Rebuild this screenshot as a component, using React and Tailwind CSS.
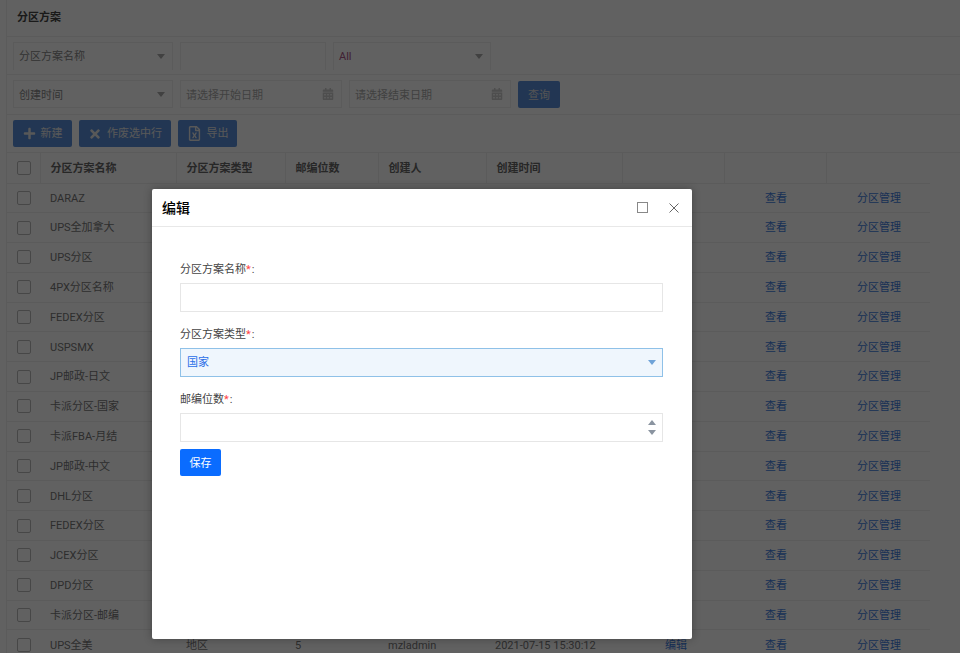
import React from "react";
import { FaPlus, FaTimes, FaRegFileExcel, FaCalendarAlt } from "react-icons/fa";

const rows = ["DARAZ","UPS全加拿大","UPS分区","4PX分区名称","FEDEX分区","USPSMX","JP邮政-日文","卡派分区-国家","卡派FBA-月结","JP邮政-中文","DHL分区","FEDEX分区","JCEX分区","DPD分区","卡派分区-邮编","UPS全美"];

function Caret({ className = "" }) {
  return <span className={`w-0 h-0 border-l-[4.5px] border-r-[4.5px] border-t-[5px] border-l-transparent border-r-transparent ${className}`} />;
}

function Box({ width, children, noBottom }) {
  return (
    <div className={`${width} h-[28px] flex items-center justify-between pl-[5px] pr-[7px] border border-[#eee] bg-white text-[11px] text-[#888] ${noBottom ? "border-b-0" : ""}`}>
      {children}
    </div>
  );
}

function Check() {
  return <span className="block w-[14px] h-[14px] border border-[#bbb] rounded-[2px] bg-white" />;
}

function Tool({ icon, label, width }) {
  return (
    <button className={`${width} h-[27px] flex items-center justify-center gap-[5px] rounded-[2px] bg-[#5b8fd9] text-[#e8e8e8] text-[11px]`}>
      {icon}
      <span className="pt-[2px]">{label}</span>
    </button>
  );
}

function Th({ children, w, last }) {
  return <th className={`${w} h-[30px] pl-[10px] pt-[3px] text-left font-bold text-[#666] text-[11px] ${last ? "" : "border-r border-[#f0f0f0]"}`}>{children}</th>;
}

function Field({ label, children }) {
  return (
    <div>
      <div className="h-[18px] pt-[4px] flex items-center text-[11px] text-[#444]">
        {label}<span className="text-[#f44]">*</span><span className="ml-[1px]">:</span>
      </div>
      {children}
    </div>
  );
}

export default function App() {
  return (
    <div className="relative h-[653px] w-[960px] overflow-hidden bg-white font-['Roboto','Noto_Sans_CJK_SC',sans-serif]">
      <div className="ml-[6px] border-l border-[#eee] h-full">
        <div className="h-[37px] flex items-center pl-[10px] border-b border-[#eee] text-[11px] font-bold text-[#444]">分区方案</div>

        <div className="h-[38px] pt-[5px] pl-[6px] flex gap-[7px] border-b border-[#eee]">
          <Box width="w-[160px]" noBottom><span className="pt-[2px]">分区方案名称</span><Caret className="border-t-[#aaa]" /></Box>
          <Box width="w-[146px]" noBottom />
          <Box width="w-[158px]" noBottom><span className="pt-[2px] text-[#a58]">All</span><Caret className="border-t-[#aaa]" /></Box>
        </div>

        <div className="h-[40px] pt-[5px] pl-[6px] flex gap-[7px] border-b border-[#eee]">
          <Box width="w-[160px]"><span className="pt-[4px]">创建时间</span><Caret className="border-t-[#aaa]" /></Box>
          <Box width="w-[162px]"><span className="pt-[4px] text-[#aaa]">请选择开始日期</span><FaCalendarAlt className="text-[#ccc] text-[12px]" /></Box>
          <Box width="w-[162px]"><span className="pt-[4px] text-[#aaa]">请选择结束日期</span><FaCalendarAlt className="text-[#ccc] text-[12px]" /></Box>
          <button className="w-[42px] h-[27px] mt-[1px] pt-[3px] rounded-[2px] bg-[#5b8fd9] text-[#ddd] text-[11px]">查询</button>
        </div>

        <div className="h-[38px] pt-[5px] pl-[6px] flex gap-[7px] border-b border-[#eee]">
          <Tool width="w-[59px]" label="新建" icon={<FaPlus className="text-[13px]" />} />
          <Tool width="w-[92px]" label="作废选中行" icon={<FaTimes className="text-[14px]" />} />
          <Tool width="w-[59px]" label="导出" icon={<FaRegFileExcel className="text-[15px]" />} />
        </div>

        <table className="table-fixed border-collapse w-[923px] text-[11px] text-[#777]">
          <thead>
            <tr className="border-b border-[#eee]">
              <th className="w-[33px] border-r border-[#f0f0f0] pl-[10px]"><Check /></th>
              <Th w="w-[136px]">分区方案名称</Th>
              <Th w="w-[109px]">分区方案类型</Th>
              <Th w="w-[93px]">邮编位数</Th>
              <Th w="w-[108px]">创建人</Th>
              <Th w="w-[136px]">创建时间</Th>
              <Th w="w-[102px]" />
              <Th w="w-[102px]" />
              <Th w="w-[104px]" last />
            </tr>
          </thead>
          <tbody>
            {rows.map((name, i) => {
              const last = i === rows.length - 1;
              return (
                <tr key={i} className="h-[29.8px] border-b border-[#f0f0f0]">
                  <td className="pl-[10px]"><Check /></td>
                  <td className="pl-[10px] pt-[2px]">{name}</td>
                  <td className="pl-[10px] pt-[2px]">{last ? "地区" : ""}</td>
                  <td className="pl-[10px] pt-[2px]">{last ? "5" : ""}</td>
                  <td className="pl-[10px] pt-[2px]">{last ? "mzladmin" : ""}</td>
                  <td className="pl-[9px] pt-[2px]">{last ? "2021-07-15 15:30:12" : ""}</td>
                  <td className="pl-[43px] pt-[2px] text-[#3f7ee0]">{last ? "编辑" : ""}</td>
                  <td className="pl-[41px] pt-[2px] text-[#3f7ee0]">查看</td>
                  <td className="pl-[31px] pt-[2px] text-[#3f7ee0]">分区管理</td>
                </tr>
              );
            })}
          </tbody>
        </table>
      </div>

      <div className="absolute inset-0 bg-black/[0.62]" />

      <div className="absolute left-[152px] top-[189px] w-[540px] h-[450px] bg-white rounded-[2px] shadow-[0_0_8px_rgba(0,0,0,0.3)]">
        <div className="h-[38px] flex items-center justify-between border-b border-[#e8e8e8] pl-[10px] pr-[12px]">
          <span className="pt-[2px] text-[14px] font-medium text-black">编辑</span>
          <div className="flex items-center gap-[20px]">
            <span className="block w-[11px] h-[11px] border-[1.5px] border-[#888]" />
            <svg width="12" height="12" viewBox="0 0 12 12" fill="none" stroke="#666" strokeWidth="1"><path d="M1.5 1.5L10.5 10.5M10.5 1.5L1.5 10.5" /></svg>
          </div>
        </div>

        <div className="pt-[32px] pl-[28px] pr-[29px] flex flex-col gap-[12px]">
          <Field label="分区方案名称">
            <div className="mt-[6px] h-[29px] border border-[#e6e6e6]" />
          </Field>
          <Field label="分区方案类型">
            <div className="mt-[6px] h-[29px] border border-[#8fc1e8] bg-[#eff6fd] flex items-center justify-between pl-[6px] pr-[6px] text-[11px] text-[#2b6fe8]">
              <span className="pt-[2px]">国家</span>
              <Caret className="border-t-[#6fa3d8]" />
            </div>
          </Field>
          <Field label="邮编位数">
            <div className="mt-[6px] h-[29px] border border-[#e6e6e6] flex items-center justify-end pr-[6px]">
              <div className="flex flex-col gap-[5px]">
                <span className="w-0 h-0 border-l-[4.5px] border-r-[4.5px] border-b-[5px] border-l-transparent border-r-transparent border-b-[#8a94a0]" />
                <Caret className="border-t-[#8a94a0]" />
              </div>
            </div>
          </Field>
        </div>

        <button className="ml-[28px] mt-[7px] pt-[3px] w-[41px] h-[27px] bg-[#0a6cff] rounded-[2px] text-white text-[11px]">保存</button>
      </div>
    </div>
  );
}
